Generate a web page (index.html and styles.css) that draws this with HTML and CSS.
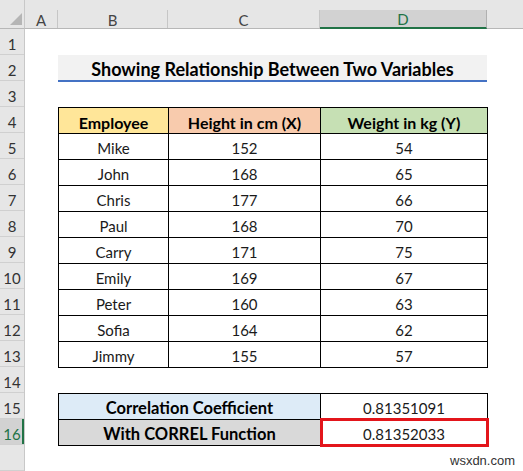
FILE: index.html
```html
<!DOCTYPE html>
<html>
<head>
<meta charset="utf-8">
<link rel="stylesheet" href="styles.css">
</head>
<body>
<div class="sheet">
  <div class="corner"><span class="tri"></span></div>
  <div class="colhead">
    <div class="ch col-a">A</div>
    <div class="ch col-b">B</div>
    <div class="ch col-c">C</div>
    <div class="ch col-d sel">D</div>
    <div class="ch col-rest"></div>
  </div>
  <div class="rowhead">
    <div class="rh">1</div><div class="rh">2</div><div class="rh">3</div><div class="rh">4</div>
    <div class="rh">5</div><div class="rh">6</div><div class="rh">7</div><div class="rh">8</div>
    <div class="rh">9</div><div class="rh">10</div><div class="rh">11</div><div class="rh">12</div>
    <div class="rh">13</div><div class="rh">14</div><div class="rh">15</div><div class="rh sel">16</div>
    <div class="rh"></div>
  </div>
  <div class="canvas">
    <div class="title">Showing Relationship Between Two Variables</div>
    <div class="data">
      <div class="cell hd emp">Employee</div><div class="cell hd hgt">Height in cm (X)</div><div class="cell hd wgt">Weight in kg (Y)</div>
      <div class="cell">Mike</div><div class="cell">152</div><div class="cell">54</div>
      <div class="cell">John</div><div class="cell">168</div><div class="cell">65</div>
      <div class="cell">Chris</div><div class="cell">177</div><div class="cell">66</div>
      <div class="cell">Paul</div><div class="cell">168</div><div class="cell">70</div>
      <div class="cell">Carry</div><div class="cell">171</div><div class="cell">75</div>
      <div class="cell">Emily</div><div class="cell">169</div><div class="cell">67</div>
      <div class="cell">Peter</div><div class="cell">160</div><div class="cell">63</div>
      <div class="cell">Sofia</div><div class="cell">164</div><div class="cell">62</div>
      <div class="cell">Jimmy</div><div class="cell">155</div><div class="cell">57</div>
    </div>
    <div class="summary">
      <div class="cell hd big coef">Correlation Coefficient</div><div class="cell">0.81351091</div>
      <div class="cell hd big correl">With CORREL Function</div><div class="cell picked">0.81352033</div>
    </div>
  </div>
</div>
<div class="wm">wsxdn.com</div>
</body>
</html>
```

FILE: styles.css
```css
* { box-sizing: border-box; }
html, body { margin: 0; padding: 0; background: #fff; }
body {
  width: 523px;
  height: 471px;
  overflow: hidden;
  position: relative;
  font-family: Lato, "Open Sans", sans-serif;
  color: #111;
}
.sheet {
  display: grid;
  grid-template-columns: 25px 1fr;
  grid-template-rows: 29px 1fr;
  width: 523px;
  height: 471px;
}
.corner {
  background: #e6e6e6;
  border-bottom: 1px solid #b7b7b7;
  border-right: 1px solid #c8c8c8;
  position: relative;
}
.tri {
  position: absolute;
  left: 10px;
  top: 13px;
  width: 0;
  height: 0;
  border-left: 12px solid transparent;
  border-bottom: 12px solid #b5b5b5;
}
.colhead {
  display: flex;
  background: #e6e6e6;
  border-bottom: 1px solid #b7b7b7;
}
.ch {
  margin-top: 10px;
  height: 18px;
  display: flex;
  align-items: center;
  justify-content: center;
  font-size: 15px;
  color: #444;
  border-right: 1px solid #c6c6c6;
  padding-top: 1px;
}
.col-a { width: 33px; }
.col-b { width: 110px; }
.col-c { width: 152px; }
.col-d { width: 167px; }
.col-rest { flex: 1; border-right: 0; }
.ch.sel {
  background: #d2d2d2;
  color: #217346;
  height: 19px;
  border-bottom: 2px solid #217346;
  border-right-color: #b0b0b0;
  margin-bottom: -1px;
}
.rowhead {
  background: #e6e6e6;
  border-right: 1px solid #c8c8c8;
  display: flex;
  flex-direction: column;
}
.rh {
  height: 26px;
  flex: none;
  border-bottom: 1px solid #d0d0d0;
  display: flex;
  align-items: center;
  justify-content: center;
  padding-top: 4px;
  font-size: 15px;
  color: #333;
}
.rh.sel {
  background: #d2d2d2;
  color: #217346;
  box-shadow: inset -2px 0 0 #217346;
}
.canvas {
  padding: 26px 0 0 33px;
  display: flex;
  flex-direction: column;
}
.title {
  width: 429px;
  height: 27px;
  background: #f2f2f2;
  border-bottom: 2px solid #4472c4;
  display: flex;
  align-items: center;
  justify-content: center;
  padding-top: 2px;
  font-size: 18px;
  font-weight: 700;
  color: #000;
}
.data {
  margin-top: 25px;
  width: 430px;
  display: grid;
  grid-template-columns: 109px 151px 166px;
  grid-auto-rows: 25px;
  gap: 1px;
  padding: 1px;
  background: #000;
}
.cell {
  background: #fff;
  display: flex;
  align-items: center;
  justify-content: center;
  padding-top: 3px;
  font-size: 15px;
  color: #1a1a1a;
}
.cell.hd { font-weight: 700; color: #000; font-size: 16px; }
.cell.hd.big { font-size: 16.5px; }
.emp { background: #ffe699; }
.hgt { background: #f8cbad; }
.wgt { background: #c6e0b4; }
.summary {
  margin-top: 25px;
  width: 430px;
  display: grid;
  grid-template-columns: 261px 166px;
  grid-auto-rows: 25px;
  gap: 1px;
  padding: 1px;
  background: #000;
}
.coef { background: #ddebf7; }
.correl { background: #d9d9d9; }
.picked { position: relative; }
.picked::after {
  content: "";
  position: absolute;
  left: -1px;
  top: -2px;
  right: -2px;
  bottom: -2px;
  border: 3px solid #e3151b;
}
.wm {
  position: absolute;
  left: 450px;
  top: 453px;
  font-family: "Liberation Sans", Arial, sans-serif;
  font-size: 13px;
  color: #333;
}
```
